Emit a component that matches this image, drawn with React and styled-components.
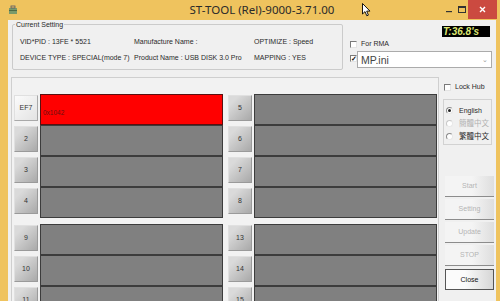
import React from "react";
import styled, { createGlobalStyle } from "styled-components";

const Global = createGlobalStyle`
  html, body { margin: 0; padding: 0; }
  body {
    width: 500px;
    height: 301px;
    overflow: hidden;
    font-family: "Liberation Sans", Arial, sans-serif;
  }
`;

const Window = styled.div`
  position: relative;
  width: 500px;
  height: 301px;
  background: #efc35e;
  display: flex;
  flex-direction: column;
  overflow: hidden;
`;

const TitleBar = styled.div`
  height: 20px;
  display: flex;
  align-items: flex-start;
  padding-left: 8px;
`;

const AppIcon = styled.svg`
  margin-top: 5px;
  width: 10px;
  height: 10px;
`;

const Title = styled.div`
  flex: 1;
  text-align: center;
  padding-left: 64px;
  font-family: "Noto Sans", "Open Sans", sans-serif;
  font-size: 11.5px;
  line-height: 20px;
  color: #2a2a2a;
`;

const Controls = styled.div`
  display: flex;
  align-items: flex-start;
  margin-right: 3px;
`;

const CtlBtn = styled.div`
  width: ${(p) => p.w}px;
  height: 19px;
  display: flex;
  align-items: center;
  justify-content: center;
  background: ${(p) => (p.close ? "#cb4a40" : "transparent")};
`;

const Client = styled.div`
  flex: 1;
  margin: 0 4px 0 8px;
  background: #f0f0f0;
  display: flex;
  flex-direction: column;
  font-size: 7px;
  line-height: 8px;
  color: #2a2a2a;
`;

const TopSection = styled.div`
  height: 57px;
  display: flex;
`;

const GroupBox = styled.div`
  position: relative;
  box-sizing: border-box;
  margin: 4px 0 0 4px;
  width: 331px;
  height: 46px;
  border: 1px solid #cbcbcb;
  border-radius: 2px;
  padding: 13px 0 0 7px;
  display: grid;
  grid-template-columns: 114px 120px auto;
  grid-auto-rows: 8px;
  row-gap: 8px;
  white-space: nowrap;
`;

const GroupLabel = styled.span`
  position: absolute;
  top: -5px;
  left: 2px;
  padding: 0 1px;
  background: #f0f0f0;
  line-height: 9px;
`;

const RightTop = styled.div`
  flex: 1;
  padding-left: 7px;
  display: flex;
  flex-direction: column;
`;

const Timer = styled.div`
  align-self: flex-end;
  margin: 6px 6px 0 0;
  width: 48px;
  height: 11px;
  box-sizing: border-box;
  padding-left: 1px;
  background: #000;
  color: #dfe873;
  font-weight: bold;
  font-style: italic;
  font-size: 10px;
  line-height: 11px;
`;

const CheckRow = styled.div`
  display: flex;
  align-items: center;
  gap: 4px;
  height: 8px;
  margin-top: ${(p) => p.mt || 0}px;
  color: ${(p) => (p.disabled ? "#a8a8a8" : "#2a2a2a")};
`;

const Check = styled.span`
  box-sizing: border-box;
  width: 7px;
  height: 7px;
  flex: none;
  background: #fff;
  border-top: 1px solid #7a7a7a;
  border-left: 1px solid #7a7a7a;
  border-right: 1px solid #e4e4e4;
  border-bottom: 1px solid #e4e4e4;
  font-size: 7px;
  line-height: 5px;
  text-align: center;
  color: #111;
  font-weight: bold;
`;

const MpRow = styled.div`
  display: flex;
  align-items: flex-end;
  margin-top: 3px;
`;

const MpCheck = styled(Check)`
  margin-bottom: 6px;
`;

const Combo = styled.div`
  box-sizing: border-box;
  width: 135px;
  height: 17px;
  border: 1px solid #ababab;
  background: #fff;
  display: flex;
  align-items: center;
  justify-content: space-between;
  padding: 0 3px 0 3px;
  font-size: 10.5px;
  color: #444;
`;

const Caret = styled.span`
  color: #9a9a9a;
  font-size: 7px;
`;

const MainSection = styled.div`
  flex: 1;
  display: flex;
  min-height: 0;
`;

const Panel = styled.div`
  margin-left: 3px;
  width: 428px;
  box-sizing: border-box;
  border: 1px solid #cfcfcf;
  border-bottom: none;
  background: #f2f2f2;
  padding: 16px 0 0 2px;
  display: flex;
  gap: 5px;
  overflow: hidden;
`;

const Column = styled.div`
  width: 209px;
  display: flex;
  flex-direction: column;
`;

const Group = styled.div`
  display: flex;
  flex-direction: column;
  margin-bottom: 6px;
`;

const Row = styled.div`
  display: flex;
  gap: 2px;
  height: 31px;
  flex: none;
`;

const SlotBtn = styled.div`
  box-sizing: border-box;
  width: 24px;
  height: 26px;
  margin-top: 1px;
  flex: none;
  display: flex;
  align-items: center;
  justify-content: center;
  border: 1px solid ${(p) => (p.light ? "#a9a9a9" : "#9a9a9a")};
  border-top-color: #e0e0e0;
  border-left-color: #e0e0e0;
  background: ${(p) =>
    p.light
      ? "linear-gradient(135deg, #fbfbfb, #e3e3e3)"
      : "linear-gradient(135deg, #dadada 20%, #a9a9a9)"};
  color: #333;
`;

const Bar = styled.div`
  flex: 1;
  box-sizing: border-box;
  border: 1px solid ${(p) => (p.red ? "#5a1010" : "#3c3c3c")};
  background: ${(p) => (p.red ? "#ff0000" : "#808080")};
  display: flex;
  align-items: center;
  padding: 6px 0 0 2px;
  font-size: 6.5px;
  color: #6a1010;
`;

const RightCol = styled.div`
  margin-left: 4px;
  width: 51px;
  display: flex;
  flex-direction: column;
`;

const LockRow = styled(CheckRow)`
  margin: 6px 0 0 1px;
`;

const LangBox = styled.div`
  box-sizing: border-box;
  margin-top: 8px;
  width: 49px;
  height: 46px;
  border: 1px solid #d2d2d2;
  padding: 4px 0 0 2px;
  display: flex;
  flex-direction: column;
`;

const RadioRow = styled.div`
  display: flex;
  align-items: center;
  gap: 6px;
  height: 13px;
  color: ${(p) => (p.disabled ? "#b0b0b0" : "#2a2a2a")};
  font-family: "Liberation Sans", "Noto Sans CJK TC", sans-serif;
  font-size: ${(p) => (p.cjk ? "7.5px" : "7px")};
`;

const Radio = styled.span`
  box-sizing: border-box;
  width: 7px;
  height: 7px;
  border-radius: 50%;
  border: 1px solid ${(p) => (p.disabled ? "#c8c8c8" : "#8a8a8a")};
  border-right-color: #e8e8e8;
  border-bottom-color: #e8e8e8;
  background: #fff;
  display: flex;
  align-items: center;
  justify-content: center;
  &::after {
    content: "";
    width: 3px;
    height: 3px;
    border-radius: 50%;
    background: ${(p) => (p.on ? "#222" : "transparent")};
  }
`;

const ActionBtn = styled.div`
  box-sizing: border-box;
  margin: ${(p) => p.mt}px 0 0 2px;
  width: 49px;
  height: 21px;
  flex: none;
  display: flex;
  align-items: center;
  justify-content: center;
  ${(p) =>
    p.active
      ? `
    border: 1px solid #555;
    background: linear-gradient(to right, #fbfbfb 40%, #d6d6d6);
    color: #111;
  `
      : `
    border-bottom: 1px solid #8c8c8c;
    background: linear-gradient(to right, #f4f4f4 55%, #dedede);
    color: #b4b4b4;
  `}
`;

const Cursor = styled.svg`
  position: absolute;
  left: 362px;
  top: 3px;
  width: 9px;
  height: 14px;
`;

const leftGroups = [
  [{ n: "EF7", light: true, red: true, text: "0x1042" }, { n: "2" }, { n: "3" }, { n: "4" }],
  [{ n: "9" }, { n: "10" }, { n: "11" }, { n: "12" }],
];
const rightGroups = [
  [{ n: "5" }, { n: "6" }, { n: "7" }, { n: "8" }],
  [{ n: "13" }, { n: "14" }, { n: "15" }, { n: "16" }],
];

const SlotColumn = ({ groups }) => (
  <Column>
    {groups.map((g, gi) => (
      <Group key={gi}>
        {g.map((s) => (
          <Row key={s.n}>
            <SlotBtn light={s.light}>{s.n}</SlotBtn>
            <Bar red={s.red}>{s.text}</Bar>
          </Row>
        ))}
      </Group>
    ))}
  </Column>
);

export default function App() {
  return (
    <Window>
      <Global />
      <TitleBar>
        <AppIcon viewBox="0 0 10 10">
          <rect x="1" y="3" width="8" height="6" fill="#7a9a6a" />
          <rect x="3" y="1" width="4" height="2" fill="none" stroke="#556" strokeWidth="0.8" />
          <rect x="1" y="5" width="8" height="1" fill="#4d6a45" />
        </AppIcon>
        <Title>ST-TOOL (Rel)-9000-3.71.00</Title>
        <Controls>
          <CtlBtn w={14}>
            <svg width="6" height="6" viewBox="0 0 6 6">
              <rect x="0" y="4" width="6" height="1.2" fill="#333" />
            </svg>
          </CtlBtn>
          <CtlBtn w={12}>
            <svg width="8" height="7" viewBox="0 0 8 7">
              <rect x="0.5" y="0.5" width="7" height="6" fill="none" stroke="#333" />
              <rect x="0.5" y="0.5" width="7" height="1.5" fill="#333" />
            </svg>
          </CtlBtn>
          <CtlBtn w={29} close>
            <svg width="7" height="7" viewBox="0 0 7 7">
              <path d="M1 1 L6 6 M6 1 L1 6" stroke="#fff" strokeWidth="1.4" />
            </svg>
          </CtlBtn>
        </Controls>
      </TitleBar>

      <Client>
        <TopSection>
          <GroupBox>
            <GroupLabel>Current Setting</GroupLabel>
            <span>VID*PID : 13FE * 5521</span>
            <span>Manufacture Name :</span>
            <span>OPTIMIZE : Speed</span>
            <span>DEVICE TYPE : SPECIAL(mode 7)</span>
            <span>Product Name : USB DISK 3.0 Pro</span>
            <span>MAPPING : YES</span>
          </GroupBox>
          <RightTop>
            <Timer>T:36.8's</Timer>
            <CheckRow mt={3}>
              <Check />
              <span>For RMA</span>
            </CheckRow>
            <MpRow>
              <MpCheck>✓</MpCheck>
              <Combo>
                <span>MP.ini</span>
                <Caret>⌄</Caret>
              </Combo>
            </MpRow>
          </RightTop>
        </TopSection>

        <MainSection>
          <Panel>
            <SlotColumn groups={leftGroups} />
            <SlotColumn groups={rightGroups} />
          </Panel>
          <RightCol>
            <LockRow>
              <Check />
              <span>Lock Hub</span>
            </LockRow>
            <LangBox>
              <RadioRow>
                <Radio on />
                <span>English</span>
              </RadioRow>
              <RadioRow disabled cjk>
                <Radio disabled />
                <span>簡體中文</span>
              </RadioRow>
              <RadioRow cjk>
                <Radio />
                <span>繁體中文</span>
              </RadioRow>
            </LangBox>
            <ActionBtn mt={31}>Start</ActionBtn>
            <ActionBtn mt={2}>Setting</ActionBtn>
            <ActionBtn mt={2}>Update</ActionBtn>
            <ActionBtn mt={2}>STOP</ActionBtn>
            <ActionBtn mt={3} active>
              Close
            </ActionBtn>
          </RightCol>
        </MainSection>
      </Client>

      <Cursor viewBox="0 0 9 14">
        <path d="M0.5 0.5 L0.5 11 L3 8.6 L4.8 12.8 L6.4 12.1 L4.7 8.1 L8 8.1 Z" fill="#fff" stroke="#000" strokeWidth="0.9" />
      </Cursor>
    </Window>
  );
}
